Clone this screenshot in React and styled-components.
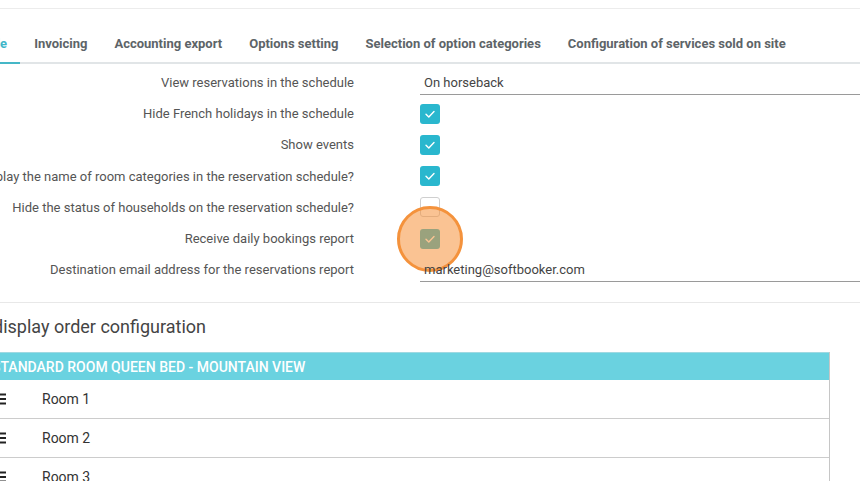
import React from 'react'
import styled, { createGlobalStyle } from 'styled-components'

const GlobalStyle = createGlobalStyle`
  html, body {
    margin: 0;
    padding: 0;
    background: #ffffff;
    overflow: hidden;
  }
  body {
    font-family: Roboto, "Liberation Sans", Arial, sans-serif;
    color: #555;
  }
`

const Page = styled.div`
  width: 860px;
  height: 481px;
  overflow: hidden;
  padding-top: 8px;
  box-sizing: border-box;
`

const TopRule = styled.div`
  height: 1px;
  background: #ececec;
`

const TabBar = styled.div`
  display: flex;
  height: 53px;
  border-bottom: 2px solid #e1e5e7;
  margin-left: -61px;
`

const Tab = styled.div`
  display: flex;
  align-items: center;
  padding: 15px 13px 0 14px;
  font-size: 13px;
  font-weight: 700;
  white-space: nowrap;
  color: ${({ $active }) => ($active ? '#3fb6c8' : '#5d6468')};
  border-bottom: 2px solid ${({ $active }) => ($active ? '#45b7c7' : 'transparent')};
  margin-bottom: -2px;
`

const Form = styled.div`
  display: grid;
  grid-template-columns: 354px 1fr;
  column-gap: 66px;
  grid-auto-rows: 31.2px;
  padding: 3px 0 17px;
  border-bottom: 1px solid #e8e8e8;
`

const Label = styled.div`
  display: flex;
  align-items: center;
  justify-content: flex-end;
  white-space: nowrap;
  font-size: 13px;
  color: #555;
`

const Field = styled.div`
  position: relative;
  display: flex;
  align-items: center;
`

const TextValue = styled.div`
  flex: 1;
  height: 24px;
  padding-left: 4px;
  display: flex;
  align-items: center;
  font-size: 13px;
  color: #444;
  border-bottom: 1px solid #9a9a9a;
  box-sizing: border-box;
  margin-right: -20px;
`

const Box = styled.div`
  width: 20px;
  height: 20px;
  border-radius: 3px;
  box-sizing: border-box;
  display: flex;
  align-items: center;
  justify-content: center;
  background: ${({ $checked }) => ($checked ? '#2ab7ce' : '#fff')};
  border: ${({ $checked }) => ($checked ? 'none' : '1.5px solid #cfcfcf')};
`

const Highlight = styled.div`
  position: absolute;
  left: -23px;
  top: -17px;
  width: 66px;
  height: 66px;
  border-radius: 50%;
  box-sizing: border-box;
  border: 3px solid #f4923c;
  background: rgba(245, 145, 58, 0.55);
  pointer-events: none;
`

const Heading = styled.h2`
  margin: 13px 0 0 -7px;
  font-size: 18px;
  font-weight: 400;
  color: #444;
  line-height: 22px;
`

const Table = styled.div`
  margin-top: 14px;
  width: 830px;
  border-right: 1px solid #c6c6c6;
  box-sizing: border-box;
`

const TableHead = styled.div`
  height: 27px;
  background: #6ad2e0;
  border-top: 1px solid #9fd9e2;
  display: flex;
  align-items: center;
  color: #fff;
  font-size: 14px;
  font-weight: 500;
  white-space: nowrap;
  text-indent: -8px;
`

const Row = styled.div`
  height: 38px;
  display: flex;
  align-items: center;
  border-bottom: 1px solid #cccccc;
  font-size: 14px;
  color: #333;
`

const Handle = styled.div`
  width: 42px;
  display: flex;
  align-items: center;
  margin-left: -8px;
  margin-right: 8px;
`

const Check = () => (
  <svg width="12" height="10" viewBox="0 0 12 10">
    <path d="M2 5.2 L4.8 8 L10 2.5" fill="none" stroke="#fff" strokeWidth="1.4" strokeLinecap="round" strokeLinejoin="round" />
  </svg>
)

const Bars = () => (
  <svg width="14" height="12" viewBox="0 0 14 12">
    <rect x="0" y="0.5" width="14" height="2" fill="#222" />
    <rect x="0" y="5" width="14" height="2" fill="#222" />
    <rect x="0" y="9.5" width="14" height="2" fill="#222" />
  </svg>
)

const tabs = [
  'Schedule',
  'Invoicing',
  'Accounting export',
  'Options setting',
  'Selection of option categories',
  'Configuration of services sold on site',
]

const rows = [
  { label: 'View reservations in the schedule', text: 'On horseback' },
  { label: 'Hide French holidays in the schedule', checked: true },
  { label: 'Show events', checked: true },
  { label: 'Display the name of room categories in the reservation schedule?', checked: true },
  { label: 'Hide the status of households on the reservation schedule?', checked: false },
  { label: 'Receive daily bookings report', checked: true, highlight: true },
  { label: 'Destination email address for the reservations report', text: 'marketing@softbooker.com' },
]

export default function App() {
  return (
    <Page>
      <GlobalStyle />
      <TopRule />
      <TabBar>
        {tabs.map((t, i) => (
          <Tab key={t} $active={i === 0}>
            {t}
          </Tab>
        ))}
      </TabBar>
      <Form>
        {rows.map(r => (
          <React.Fragment key={r.label}>
            <Label>{r.label}</Label>
            <Field>
              {r.text ? (
                <TextValue>{r.text}</TextValue>
              ) : (
                <Box $checked={r.checked}>{r.checked ? <Check /> : null}</Box>
              )}
              {r.highlight ? <Highlight /> : null}
            </Field>
          </React.Fragment>
        ))}
      </Form>
      <Heading>display order configuration</Heading>
      <Table>
        <TableHead>STANDARD ROOM QUEEN BED - MOUNTAIN VIEW</TableHead>
        {['Room 1', 'Room 2', 'Room 3'].map(room => (
          <Row key={room}>
            <Handle>
              <Bars />
            </Handle>
            {room}
          </Row>
        ))}
      </Table>
    </Page>
  )
}
